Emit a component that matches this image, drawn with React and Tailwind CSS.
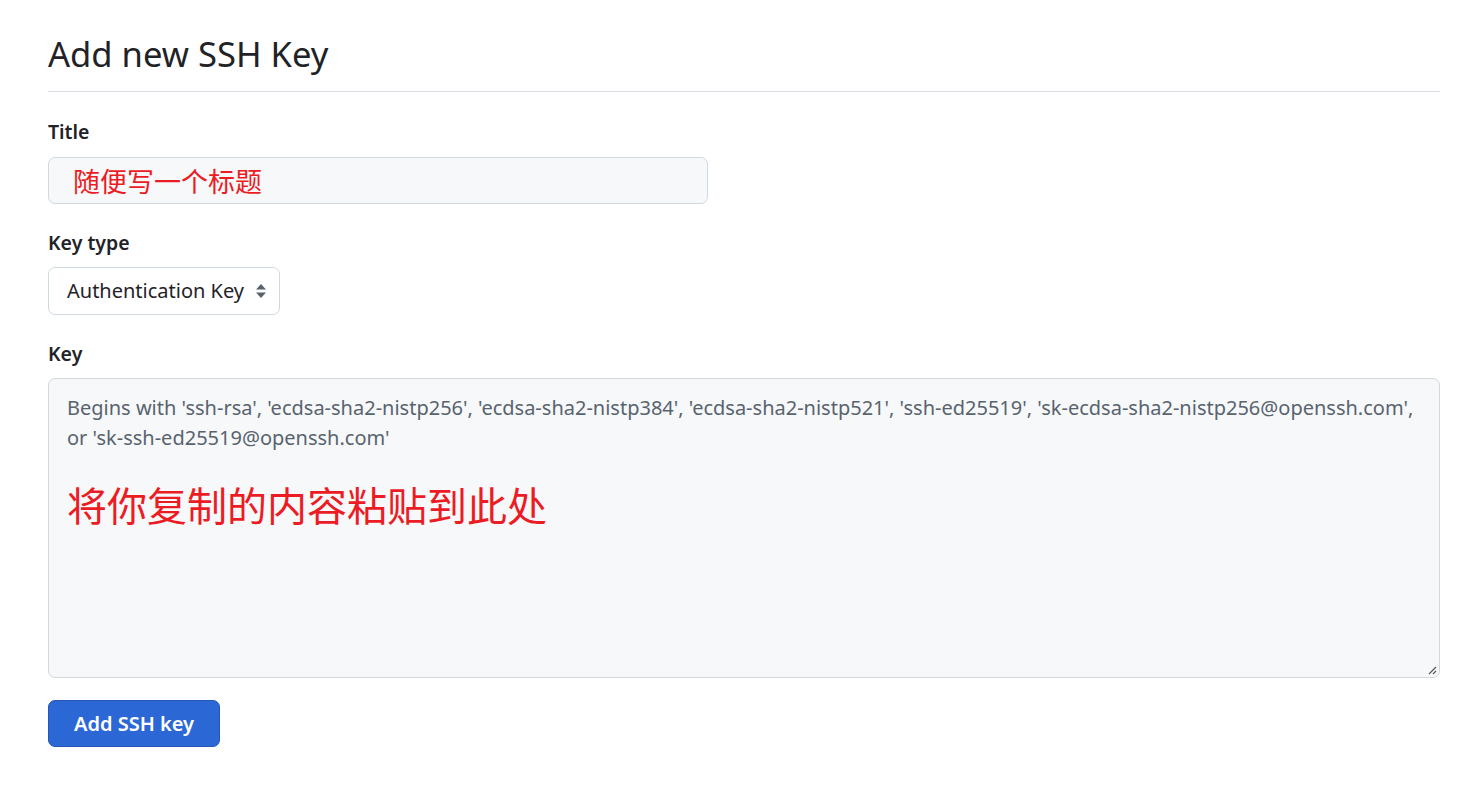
import React from "react";

const sans = "font-['Segoe_UI','Noto_Sans','Noto_Sans_CJK_SC',sans-serif]";

function Label({ children }) {
  return <div className="text-[19.5px] font-semibold leading-[24px] text-[#1f2328]">{children}</div>;
}

export default function App() {
  return (
    <div className={`${sans} bg-white min-h-[793px] pl-12 pr-9 pt-[30px] text-[#1f2328]`}>
      {/* ===== HEADER ===== */}
      <h2 className="text-[34.6px] leading-[48px] font-normal pb-[13px] border-b border-[#d8dee4]">
        Add new SSH Key
      </h2>

      {/* ===== TITLE ===== */}
      <div className="mt-[28px]">
        <Label>Title</Label>
        <div className="mt-[13px] w-[660px] h-[47px] rounded-[7px] border border-[#d1d9e0] bg-[#f6f8fa] flex items-center px-6">
          <span className="text-[27px] leading-[34px] text-[#ec1c24] font-['Noto_Sans_CJK_SC',sans-serif]">随便写一个标题</span>
        </div>
      </div>

      {/* ===== KEY TYPE ===== */}
      <div className="mt-[27px]">
        <Label>Key type</Label>
        <div className="mt-[12px] w-[232px] h-[48px] rounded-[7px] border border-[#d1d9e0] bg-white flex items-center pl-[18px] pr-[12px] justify-between">
          <span className="text-[20px]">Authentication Key</span>
          <svg width="12" height="16" viewBox="0 0 12 16" className="text-[#59636e]">
            <path d="M6 1 L11 6.5 H1 Z M6 15 L11 9.5 H1 Z" fill="currentColor" />
          </svg>
        </div>
      </div>

      {/* ===== KEY ===== */}
      <div className="mt-[27px]">
        <Label>Key</Label>
        <div className="relative mt-[12px] h-[300px] rounded-[7px] border border-[#d1d9e0] bg-[#f6f8fa] px-[18px] pt-[14px]">
          <p className="text-[20px] leading-[30px] text-[#59636e]">
            Begins with 'ssh-rsa', 'ecdsa-sha2-nistp256', 'ecdsa-sha2-nistp384', 'ecdsa-sha2-nistp521', 'ssh-ed25519', 'sk-ecdsa-sha2-nistp256@openssh.com', or 'sk-ssh-ed25519@openssh.com'
          </p>
          <p className="mt-[26px] text-[40px] leading-[50px] text-[#ec1c24] font-['Noto_Sans_CJK_SC',sans-serif]">
            将你复制的内容粘贴到此处
          </p>
          <svg width="10" height="10" viewBox="0 0 10 10" className="absolute right-[2px] bottom-[2px] text-[#555]">
            <path d="M9 2 L2 9 M9 6 L6 9" stroke="currentColor" strokeWidth="1.2" />
          </svg>
        </div>
      </div>

      {/* ===== SUBMIT ===== */}
      <button className="mt-[22px] h-[47px] w-[172px] rounded-[7px] bg-[#2c67d6] border border-[#2457b8] text-white text-[20px] font-semibold">
        Add SSH key
      </button>
    </div>
  );
}
